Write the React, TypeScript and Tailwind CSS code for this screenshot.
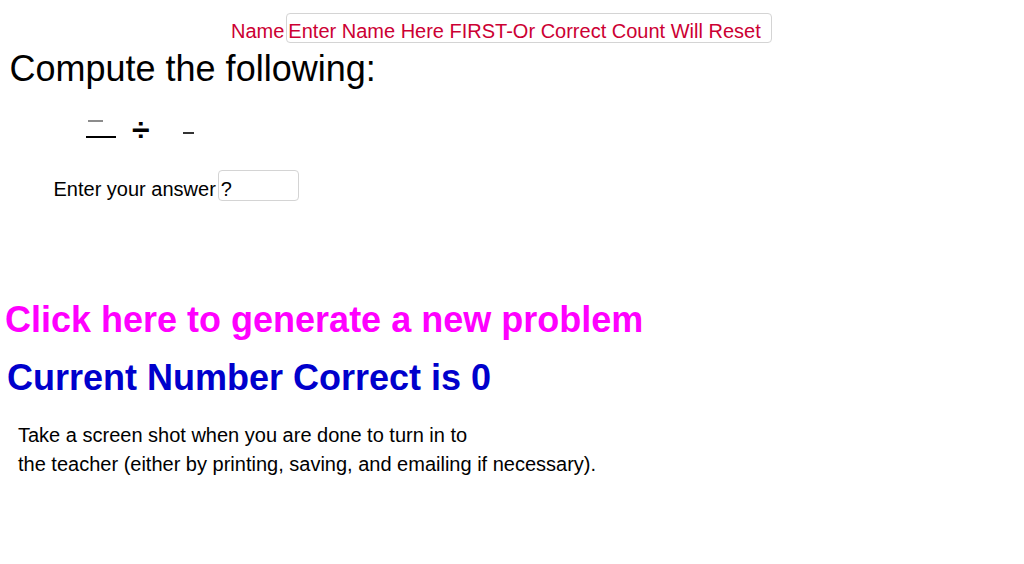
const App = () => {
  return (
    <div
      className="w-[1024px] h-[564px] overflow-hidden bg-white text-black"
      style={{ fontFamily: '"Liberation Sans", Arial, sans-serif' }}
    >
      {/* Name row */}
      <div className="flex items-baseline pl-[231px] pt-[13px]">
        <span className="text-[20px] leading-[24px] text-[#cc0033]">Name</span>
        <div className="ml-[2px] h-[30px] w-[486px] rounded-[4px] border border-[#d4d4d4] pl-[1px] pt-[4.5px] text-[20px] leading-[24px] text-[#cc0033]">
          Enter Name Here FIRST-Or Correct Count Will Reset
        </div>
      </div>

      {/* Heading */}
      <h1 className="mt-[5.5px] pl-[9.5px] text-[36px] leading-[40px]">
        Compute the following:
      </h1>

      {/* Problem */}
      <div className="mt-[21.5px] flex h-[40px] items-start">
        <div className="ml-[86px] flex flex-col">
          <div className="ml-[2px] mt-[9.5px] h-[2px] w-[15px] bg-[#8c8c8c]" />
          <div className="mt-[14px] h-[2px] w-[30px] bg-black" />
        </div>
        <span className="ml-[16px] mt-[1px] text-[32px] font-bold leading-[38px]">
          ÷
        </span>
        <div className="ml-[33px] mt-[22px] h-[1.5px] w-[11px] bg-[#333333]" />
      </div>

      {/* Answer */}
      <div className="mt-[19.5px] flex items-start pl-[53.5px]">
        <span className="mt-[7.5px] text-[20px] leading-[24px]">
          Enter your answer
        </span>
        <div className="ml-[2px] h-[31px] w-[81px] rounded-[4px] border border-[#d4d4d4] pl-[2px] pt-[6.5px] text-[20px] leading-[24px]">
          ?
        </div>
      </div>

      {/* Actions */}
      <div className="mt-[99px] pl-[5px] text-[36px] font-bold leading-[40px] text-[#ff00ff]">
        Click here to generate a new problem
      </div>
      <div className="mt-[18px] pl-[7px] text-[36px] font-bold leading-[40px] text-[#0000cc]">
        Current Number Correct is 0
      </div>

      <p className="mt-[23px] pl-[18px] text-[20px] leading-[28.5px]">
        Take a screen shot when you are done to turn in to
        <br />
        the teacher (either by printing, saving, and emailing if necessary).
      </p>
    </div>
  );
};

export default App;
